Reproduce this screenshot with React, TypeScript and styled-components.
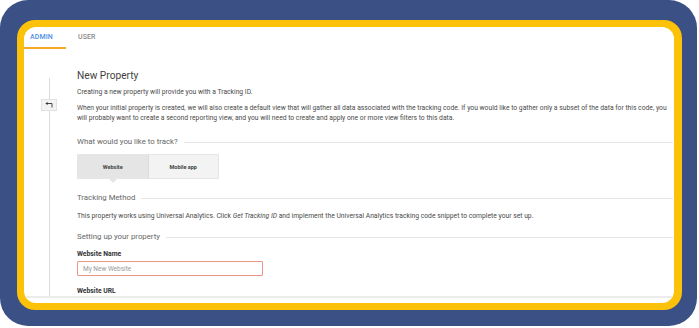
import React from "react";
import styled, { createGlobalStyle } from "styled-components";

const GlobalStyle = createGlobalStyle`
  html, body {
    margin: 0;
    padding: 0;
    background: #ffffff;
  }
  body {
    font-family: Roboto, "Liberation Sans", Arial, sans-serif;
  }
`;

const BlueFrame = styled.div`
  width: 697px;
  height: 326px;
  box-sizing: border-box;
  padding: 20px 15px 16px 17px;
  background: #3b5084;
  border-radius: 28px;
  display: flex;
`;

const YellowFrame = styled.div`
  flex: 1;
  display: flex;
  padding: 7px 8px 7px 7px;
  background: #fcc109;
  border-radius: 18px;
`;

const Screen = styled.div`
  flex: 1;
  display: flex;
  flex-direction: column;
  background: #ffffff;
  border-radius: 12px;
  overflow: hidden;
  padding-bottom: 5px;
`;

const TabRow = styled.div`
  height: 22px;
  display: flex;
  gap: 6px;
  flex-shrink: 0;
`;

const Tab = styled.div<{ $active?: boolean }>`
  width: 42px;
  box-sizing: border-box;
  padding-left: 6px;
  display: flex;
  align-items: center;
  font-size: 7px;
  font-weight: 500;
  letter-spacing: 0.1px;
  color: ${(p) => (p.$active ? "#4a8fe6" : "#8a8a8a")};
  border-bottom: 2px solid ${(p) => (p.$active ? "#f6a829" : "transparent")};
`;

const Body = styled.div`
  height: 247px;
  display: flex;
  overflow: hidden;
  border-bottom: 2px solid #ececec;
  flex-shrink: 0;
`;

const Rail = styled.div`
  width: 53px;
  flex-shrink: 0;
  box-sizing: border-box;
  padding: 29px 0 0 17px;
  display: flex;
  flex-direction: column;
`;

const RailInner = styled.div`
  width: 16px;
  flex: 1;
  display: flex;
  flex-direction: column;
  align-items: center;
`;

const RailLine = styled.div<{ $grow?: boolean }>`
  width: 1px;
  background: #dcdcdc;
  height: 21px;
  ${(p) => (p.$grow ? "flex: 1;" : "")}
`;

const BackButton = styled.div`
  width: 16px;
  height: 12px;
  box-sizing: border-box;
  background: #f3f3f3;
  border: 1px solid #e2e2e2;
  display: flex;
  align-items: center;
  justify-content: center;
`;

const Content = styled.div`
  width: 596px;
  display: flex;
  flex-direction: column;
  color: #444;
`;

const Title = styled.h1`
  margin: 20px 0 0;
  font-size: 10.2px;
  line-height: 14px;
  font-weight: 400;
  color: #3f3f3f;
`;

const Text = styled.p<{ $top: number }>`
  margin: ${(p) => p.$top}px 0 0;
  font-size: 6.75px;
  line-height: 10px;
  color: #4a4a4a;

  em {
    font-style: italic;
  }
`;

const SectionHeading = styled.div<{ $top: number }>`
  margin-top: ${(p) => p.$top}px;
  display: flex;
  align-items: center;
  gap: 6px;
  font-size: 7.8px;
  line-height: 12px;
  color: #666;
  white-space: nowrap;

  &::after {
    content: "";
    flex: 1;
    height: 1px;
    background: #e6e6e6;
  }
`;

const Segmented = styled.div`
  margin-top: 6px;
  width: 142px;
  height: 25px;
  display: flex;
  box-sizing: border-box;
  border: 1px solid #e6e6e6;
`;

const Segment = styled.div<{ $selected?: boolean }>`
  position: relative;
  flex: 1;
  display: flex;
  align-items: center;
  justify-content: center;
  font-size: 5.5px;
  font-weight: 700;
  color: #444;
  background: ${(p) => (p.$selected ? "#e5e5e5" : "#f3f3f3")};
  ${(p) => (p.$selected ? "border-right: 1px solid #dcdcdc;" : "")}

  &::after {
    content: "";
    display: ${(p) => (p.$selected ? "block" : "none")};
    position: absolute;
    left: 50%;
    bottom: -5px;
    transform: translateX(-50%);
    border-left: 4px solid transparent;
    border-right: 4px solid transparent;
    border-top: 4px solid #e5e5e5;
  }
`;

const Label = styled.div<{ $top: number }>`
  margin-top: ${(p) => p.$top}px;
  font-size: 6.8px;
  line-height: 10px;
  font-weight: 700;
  color: #333;
`;

const Input = styled.input`
  margin-top: 2px;
  width: 186px;
  height: 15px;
  box-sizing: border-box;
  padding: 0 0 0 5px;
  border: 1px solid #e99686;
  border-radius: 1px;
  font-family: Roboto, "Liberation Sans", Arial, sans-serif;
  font-size: 6.5px;
  color: #444;
  outline: none;

  &::placeholder {
    color: #9a9a9a;
  }
`;

const BackIcon = () => (
  <svg width="8" height="6" viewBox="0 0 8 6">
    <path d="M7 5.5V1.5H1.5" fill="none" stroke="#333" strokeWidth="0.9" />
    <path d="M0.3 1.5L2.6 0V3z" fill="#333" />
  </svg>
);

const App: React.FC = () => {
  return (
    <>
      <GlobalStyle />
      <BlueFrame>
        <YellowFrame>
          <Screen>
            <TabRow>
              <Tab $active>ADMIN</Tab>
              <Tab>USER</Tab>
            </TabRow>
            <Body>
              <Rail>
                <RailInner>
                  <RailLine />
                  <BackButton>
                    <BackIcon />
                  </BackButton>
                  <RailLine $grow />
                </RailInner>
              </Rail>
              <Content>
                <Title>New Property</Title>
                <Text $top={4}>
                  Creating a new property will provide you with a Tracking ID.
                </Text>
                <Text $top={6}>
                  When your initial property is created, we will also create a
                  default view that will gather all data associated with the
                  tracking code. If you would like to gather only a subset of
                  the data for this code, you will probably want to create a
                  second reporting view, and you will need to create and apply
                  one or more view filters to this data.
                </Text>
                <SectionHeading $top={13}>What would you like to track?</SectionHeading>
                <Segmented>
                  <Segment $selected>Website</Segment>
                  <Segment>Mobile app</Segment>
                </Segmented>
                <SectionHeading $top={13}>Tracking Method</SectionHeading>
                <Text $top={7}>
                  This property works using Universal Analytics. Click{" "}
                  <em>Get Tracking ID</em> and implement the Universal Analytics
                  tracking code snippet to complete your set up.
                </Text>
                <SectionHeading $top={10}>Setting up your property</SectionHeading>
                <Label $top={6}>Website Name</Label>
                <Input placeholder="My New Website" />
                <Label $top={10}>Website URL</Label>
              </Content>
            </Body>
          </Screen>
        </YellowFrame>
      </BlueFrame>
    </>
  );
};

export default App;
